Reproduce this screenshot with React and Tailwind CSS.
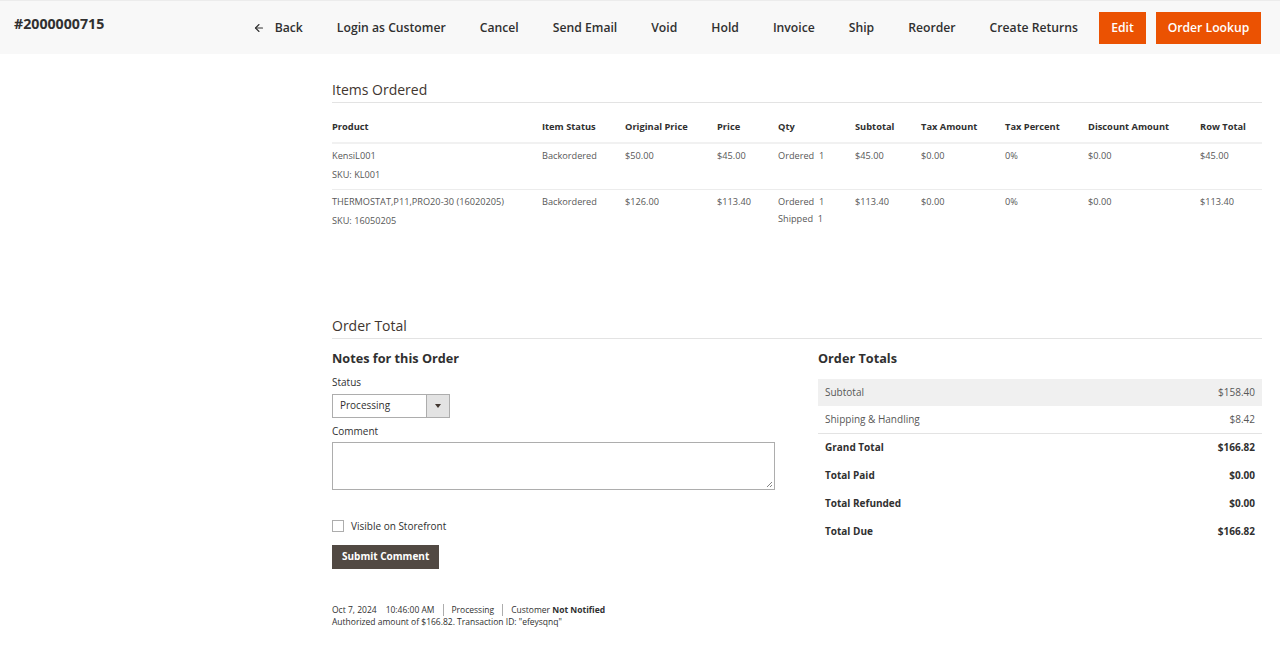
import { ArrowLeft } from 'lucide-react';

const actions = ['Login as Customer', 'Cancel', 'Send Email', 'Void', 'Hold', 'Invoice', 'Ship', 'Reorder', 'Create Returns'];

const columns = [
  ['Product', 210],
  ['Item Status', 83],
  ['Original Price', 92],
  ['Price', 61],
  ['Qty', 77],
  ['Subtotal', 66],
  ['Tax Amount', 84],
  ['Tax Percent', 83],
  ['Discount Amount', 112],
  ['Row Total', 62],
];

const items = [
  {
    name: 'KensiL001',
    sku: 'KL001',
    status: 'Backordered',
    original: '$50.00',
    price: '$45.00',
    qty: [['Ordered', 1]],
    subtotal: '$45.00',
    tax: '$0.00',
    percent: '0%',
    discount: '$0.00',
    total: '$45.00',
  },
  {
    name: 'THERMOSTAT,P11,PRO20-30 (16020205)',
    sku: '16050205',
    status: 'Backordered',
    original: '$126.00',
    price: '$113.40',
    qty: [['Ordered', 1], ['Shipped', 1]],
    subtotal: '$113.40',
    tax: '$0.00',
    percent: '0%',
    discount: '$0.00',
    total: '$113.40',
  },
];

const totals = [
  ['Grand Total', '$166.82'],
  ['Total Paid', '$0.00'],
  ['Total Refunded', '$0.00'],
  ['Total Due', '$166.82'],
];

function Header() {
  return (
    <div className="flex h-[54px] items-center border-t border-[#ececec] bg-[#f8f8f8] pl-[14px] pr-[19px]">
      <h1 className="mb-[8px] text-[14.2px] font-bold text-[#303030]">#2000000715</h1>
      <div className="ml-auto mt-[1px] flex items-center text-[12.2px] font-semibold text-[#303030]">
        <button className="flex items-center gap-[10px] pr-[17px]">
          <ArrowLeft size={12} strokeWidth={2.2} />
          Back
        </button>
        {actions.map((a) => (
          <button key={a} className="px-[17px]">
            {a}
          </button>
        ))}
        <button className="ml-[4px] h-[32px] w-[47px] bg-[#eb5202] text-white">Edit</button>
        <button className="ml-[10px] h-[32px] w-[105px] bg-[#eb5202] text-white">Order Lookup</button>
      </div>
    </div>
  );
}

function SectionTitle({ children }) {
  return (
    <div className="border-b border-[#e3e3e3] pb-[1px] text-[14px] leading-[22px] text-[#41362f]">{children}</div>
  );
}

function ItemsTable() {
  return (
    <table className="mt-[17px] w-full table-fixed border-collapse text-[9.2px]">
      <colgroup>
        {columns.map(([c, w]) => (
          <col key={c} style={{ width: w }} />
        ))}
      </colgroup>
      <thead>
        <tr className="border-b-2 border-[#f1f1f1]">
          {columns.map(([c]) => (
            <th key={c} className="pb-[8px] text-left text-[9.3px] font-bold text-[#303030]">
              {c}
            </th>
          ))}
        </tr>
      </thead>
      <tbody className="text-[#575757]">
        {items.map((it) => (
          <tr key={it.sku} className="border-b border-[#ececec] align-top last:border-b-0">
            <td className="pt-[2px] pb-[4px]">
              <div className="leading-[19px]">{it.name}</div>
              <div className="leading-[20px]">SKU: {it.sku}</div>
            </td>
            <td className="pt-[2px] leading-[19px]">{it.status}</td>
            <td className="pt-[2px] leading-[19px]">{it.original}</td>
            <td className="pt-[2px] leading-[19px]">{it.price}</td>
            <td className="pt-[2px]">
              {it.qty.map(([k, v]) => (
                <div key={k} className="leading-[16px] first:leading-[19px]">
                  {k}&nbsp; {v}
                </div>
              ))}
            </td>
            <td className="pt-[2px] leading-[19px]">{it.subtotal}</td>
            <td className="pt-[2px] leading-[19px]">{it.tax}</td>
            <td className="pt-[2px] leading-[19px]">{it.percent}</td>
            <td className="pt-[2px] leading-[19px]">{it.discount}</td>
            <td className="pt-[2px] leading-[19px]">{it.total}</td>
          </tr>
        ))}
      </tbody>
    </table>
  );
}

function Notes() {
  return (
    <div className="w-[443px]">
      <h3 className="text-[12.7px] font-bold leading-[20px] text-[#303030]">Notes for this Order</h3>
      <div className="mt-[6px] text-[10px] leading-[16px] text-[#303030]">Status</div>
      <div className="mt-[4px] flex h-[24px] w-[118px] border border-[#adadad] bg-white text-[10px] text-[#303030]">
        <div className="flex flex-1 items-center pl-[7px]">Processing</div>
        <div className="flex w-[23px] items-center justify-center border-l border-[#adadad] bg-[#e3e3e3]">
          <span className="h-0 w-0 border-x-[3px] border-t-[4px] border-x-transparent border-t-[#41362f]"></span>
        </div>
      </div>
      <div className="mt-[5px] text-[10px] leading-[16px] text-[#303030]">Comment</div>
      <div className="relative mt-[3px] h-[48px] w-[443px] border border-[#adadad] bg-white">
        <svg className="absolute bottom-[1px] right-[1px]" width="7" height="7" viewBox="0 0 7 7">
          <path d="M1 6 L6 1 M4 6 L6 4" stroke="#777" strokeWidth="0.9" />
        </svg>
      </div>
      <label className="mt-[29px] flex items-center gap-[7px] text-[10px] text-[#303030]">
        <span className="h-[12px] w-[12px] border border-[#adadad] bg-white"></span>
        Visible on Storefront
      </label>
      <button className="mt-[11px] h-[24px] bg-[#514943] px-[10px] text-[10px] font-bold text-white">Submit Comment</button>
      <div className="mt-[35px] text-[8.5px] leading-[12px] text-[#303030]">
        <div className="flex items-center">
          <span>Oct 7, 2024</span>
          <span className="ml-[9px]">10:46:00 AM</span>
          <span className="mx-[8px] h-[12px] border-l border-[#adadad]"></span>
          <span>Processing</span>
          <span className="mx-[8px] h-[12px] border-l border-[#adadad]"></span>
          <span>
            Customer <b>Not Notified</b>
          </span>
        </div>
        <div>Authorized amount of $166.82. Transaction ID: "efeysqnq"</div>
      </div>
    </div>
  );
}

function Totals() {
  return (
    <div className="w-[444px]">
      <h3 className="text-[12.7px] font-bold leading-[20px] text-[#303030]">Order Totals</h3>
      <div className="mt-[11px] text-[10px] text-[#303030]">
        <div className="flex h-[27px] items-center justify-between bg-[#f0f0f0] px-[7px] text-[#575757]">
          <span>Subtotal</span>
          <span>$158.40</span>
        </div>
        <div className="flex h-[28px] items-center justify-between border-b border-[#e3e3e3] px-[7px] text-[#575757]">
          <span>Shipping &amp; Handling</span>
          <span>$8.42</span>
        </div>
        {totals.map(([k, v]) => (
          <div key={k} className="flex h-[28px] items-center justify-between px-[7px] font-bold">
            <span>{k}</span>
            <span>{v}</span>
          </div>
        ))}
      </div>
    </div>
  );
}

export default function App() {
  return (
    <div className="min-h-[659px] bg-white font-['Open_Sans',sans-serif]">
      <Header />
      <div className="ml-[332px] w-[930px] pt-[25px]">
        <SectionTitle>Items Ordered</SectionTitle>
        <ItemsTable />
        <div className="mt-[80px]">
          <SectionTitle>Order Total</SectionTitle>
        </div>
        <div className="mt-[9px] flex justify-between">
          <Notes />
          <Totals />
        </div>
      </div>
    </div>
  );
}
